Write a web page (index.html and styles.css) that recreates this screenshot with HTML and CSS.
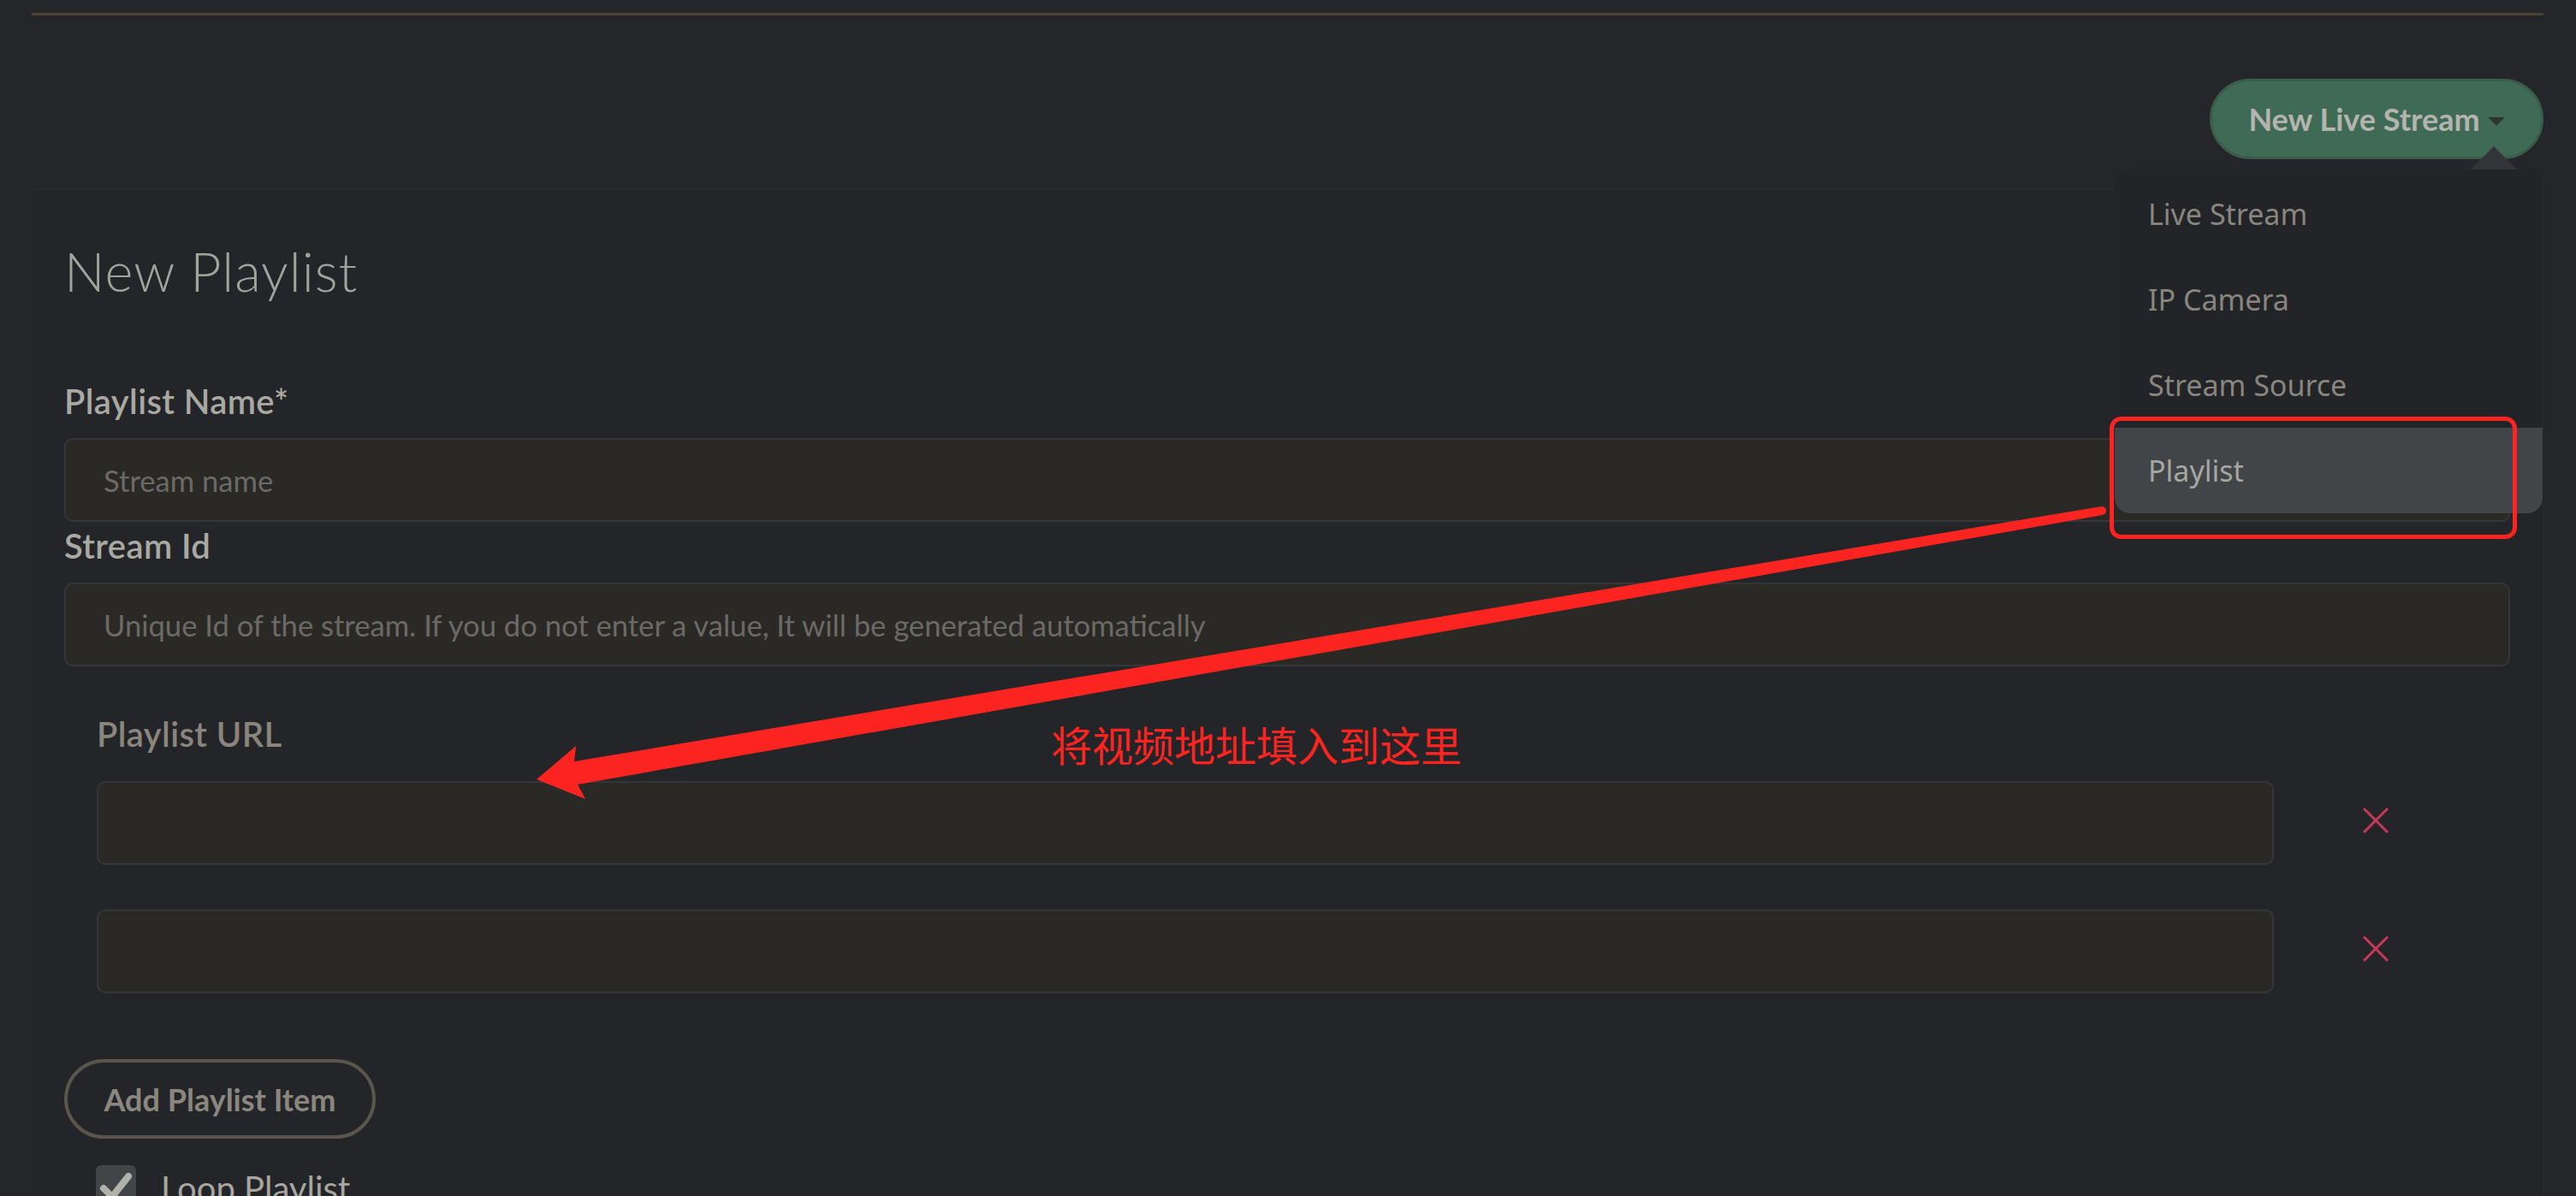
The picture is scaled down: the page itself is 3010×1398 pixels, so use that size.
FILE: index.html
```html
<!DOCTYPE html>
<html lang="zh-CN">
<head>
<meta charset="utf-8">
<title>New Playlist</title>
<link rel="stylesheet" href="styles.css">
</head>
<body>
<div class="page">
  <div class="topline"></div>

  <div class="header">
    <button class="btn-new" type="button"><span>New Live Stream</span><i class="caret"></i></button>
    <div class="menu">
      <div class="menu-pointer"></div>
      <div class="menu-item">Live Stream</div>
      <div class="menu-item">IP Camera</div>
      <div class="menu-item">Stream Source</div>
      <div class="menu-item active">Playlist</div>
    </div>
  </div>

  <div class="card">
    <h1 class="title">New Playlist</h1>

    <label class="label first">Playlist Name*</label>
    <input class="field" type="text" placeholder="Stream name">

    <label class="label">Stream Id</label>
    <input class="field" type="text" placeholder="Unique Id of the stream. If you do not enter a value, It will be generated automatically">

    <div class="playlist">
      <label class="label muted">Playlist URL</label>
      <div class="url-row">
        <input class="field" type="text">
        <svg class="remove" viewBox="0 0 30 30"><path d="M1 1 L29 29 M29 1 L1 29"/></svg>
      </div>
      <div class="url-row">
        <input class="field" type="text">
        <svg class="remove" viewBox="0 0 30 30"><path d="M1 1 L29 29 M29 1 L1 29"/></svg>
      </div>
    </div>

    <button class="btn-add" type="button">Add Playlist Item</button>

    <div class="check-row">
      <span class="checkbox"><svg viewBox="0 0 47 47"><path d="M9 27 L19 37 L38 13"/></svg></span>
      <span class="check-label">Loop Playlist</span>
    </div>
  </div>
</div>

<svg class="annot" viewBox="0 0 3010 1398" width="3010" height="1398">
  <rect x="2467.5" y="489.5" width="471" height="138" rx="11" ry="11"/>
  <polygon points="627,911 673,872 671,890 2455,592 2457,602 675,917 684,934"/>
  <circle cx="2456" cy="597" r="5"/>
</svg>
<div class="annot-text">将视频地址填入到这里</div>
</body>
</html>
```

FILE: styles.css
```css
* { box-sizing: border-box; }

html, body {
  margin: 0;
  padding: 0;
  background: #252629;
  width: 3010px;
  height: 1398px;
  overflow: hidden;
  font-family: Lato, "Liberation Sans", sans-serif;
}

.page {
  position: relative;
  width: 3010px;
}

.topline {
  margin: 15px 38px 0 37px;
  height: 3px;
  background: #4a4034;
}

.header {
  position: relative;
  display: flex;
  justify-content: flex-end;
  margin-top: 74px;
  padding-right: 38px;
}

.btn-new {
  height: 94px;
  width: 390px;
  border-radius: 47px;
  background: #3f6b56;
  border: 3px solid #3a5c48;
  color: #b4b4ae;
  font-family: Lato, "Liberation Sans", sans-serif;
  font-weight: 700;
  font-size: 36px;
  display: flex;
  align-items: center;
  justify-content: center;
  gap: 9px;
  padding: 0;
  margin: 0;
}

.caret {
  display: block;
  width: 0;
  height: 0;
  border-left: 10px solid transparent;
  border-right: 10px solid transparent;
  border-top: 10px solid #2d3530;
  margin-top: 6px;
}

.menu {
  position: absolute;
  top: 106px;
  right: 39px;
  width: 500px;
  padding-top: 2px;
  background: #232427;
  border-radius: 18px;
  box-shadow: 0 0 0 1px #262729;
  z-index: 5;
}

.menu-pointer {
  position: absolute;
  top: -27px;
  right: 30px;
  width: 0;
  height: 0;
  border-left: 27px solid transparent;
  border-right: 27px solid transparent;
  border-bottom: 27px solid #333538;
}

.menu-item {
  height: 100px;
  line-height: 100px;
  padding-left: 39px;
  font-family: "Noto Sans", sans-serif;
  font-weight: 400;
  font-size: 34px;
  color: #898680;
}

.menu-item.active {
  background: #414548;
  color: #a6a6a2;
  border-radius: 0 0 18px 18px;
}

.card {
  margin: 35px 38px 0 37px;
  padding: 58px 38px 40px 37px;
  background: #242528;
  border: 1px solid #2a2a2c;
  border-bottom: none;
  height: 1200px;
}

.title {
  margin: 0;
  font-family: Lato, sans-serif;
  font-weight: 300;
  font-size: 63px;
  letter-spacing: 1px;
  line-height: 74px;
  color: #a3a39e;
}

.label {
  display: block;
  font-family: Lato, sans-serif;
  font-weight: 600;
  font-size: 40px;
  letter-spacing: 0.4px;
  line-height: 46px;
  color: #a9a8a2;
  margin: 5px 0 20px;
}

.label.first { margin-top: 92px; }

.label.muted {
  color: #8a857d;
  margin: 56px 0 32px;
}

.field {
  display: block;
  width: 100%;
  height: 98px;
  margin: 0;
  padding: 0 44px;
  background: #2a2925;
  border: 2px solid #35363a;
  border-radius: 10px;
  font-family: Lato, sans-serif;
  font-size: 34.6px;
  color: #a9a8a2;
  outline: none;
}

.field::placeholder {
  color: #6c6a66;
}

.playlist {
  padding-left: 38px;
}

.url-row {
  display: flex;
  align-items: center;
  width: 2544px;
}

.url-row + .url-row { margin-top: 52px; }

.url-row .field { flex: 0 0 2544px; }

.remove {
  flex: 0 0 30px;
  width: 30px;
  height: 30px;
  margin-left: 104px;
  margin-top: -6px;
  stroke: #c7385a;
  stroke-width: 3;
  fill: none;
}

.btn-add {
  display: block;
  margin: 77px 0 0 0;
  height: 93px;
  width: 364px;
  border-radius: 47px;
  border: 4px solid #5a554d;
  background: transparent;
  color: #8b877f;
  font-family: Lato, sans-serif;
  font-weight: 700;
  font-size: 36px;
  padding: 0;
}

.check-row {
  display: flex;
  align-items: flex-start;
  margin-top: 31px;
  margin-left: 37px;
}

.checkbox {
  width: 47px;
  height: 47px;
  border-radius: 6px;
  background: #414548;
  display: block;
}

.checkbox svg {
  width: 47px;
  height: 47px;
  display: block;
  fill: none;
  stroke: #b2b0ab;
  stroke-width: 8;
  stroke-linecap: round;
  stroke-linejoin: round;
}

.check-label {
  margin-left: 29px;
  font-family: Lato, sans-serif;
  font-size: 40px;
  line-height: 46px;
  margin-top: 4px;
  color: #a8a6a0;
}

.annot {
  position: absolute;
  left: 0;
  top: 0;
  pointer-events: none;
  z-index: 10;
}

.annot rect {
  fill: none;
  stroke: #fc2420;
  stroke-width: 5;
}

.annot polygon, .annot circle {
  fill: #fc2420;
}

.annot-text {
  position: absolute;
  left: 1228px;
  top: 841px;
  font-family: "Noto Sans CJK SC", sans-serif;
  font-size: 48px;
  line-height: 56px;
  color: #fc2420;
  z-index: 10;
  white-space: nowrap;
}
```
